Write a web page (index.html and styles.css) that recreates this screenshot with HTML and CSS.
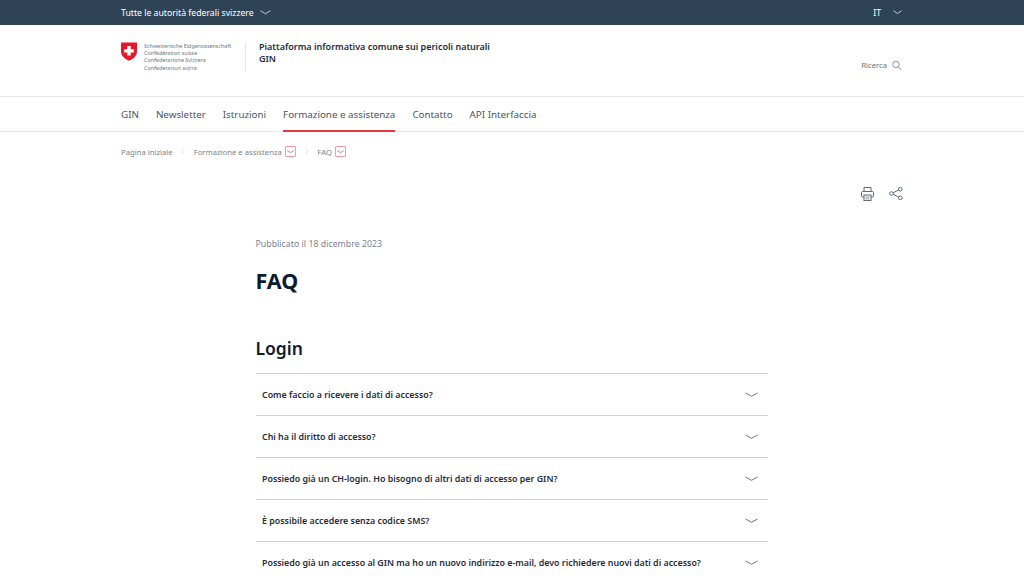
FILE: index.html
```html
<!DOCTYPE html>
<html lang="it">
<head>
<meta charset="utf-8">
<title>FAQ</title>
<link rel="stylesheet" href="styles.css">
</head>
<body>
<div class="topbar">
  <div class="wrap topbar-in">
    <div class="top-left"><span>Tutte le autorità federali svizzere</span>
      <svg class="chev" width="11" height="5" viewBox="0 0 11 5"><path d="M.5.7 5.5 3.8 10.5.7" fill="none" stroke="#c3ccd4" stroke-width="1"/></svg>
    </div>
    <div class="top-right"><span>IT</span>
      <svg class="chev" width="9" height="5" viewBox="0 0 9 5"><path d="M.5.7 4.5 3.6 8.5.7" fill="none" stroke="#c3ccd4" stroke-width="1"/></svg>
    </div>
  </div>
</div>
<header class="header">
  <div class="wrap header-in">
    <div class="brand">
      <svg class="flag" width="16" height="19" viewBox="0 0 16 19">
        <path d="M0 .5H16V9.5C16 14 12 17 8 18.7 4 17 0 14 0 9.5Z" fill="#e8182c"/>
        <path d="M6.3 4H9.7V7.2H12.8V10.4H9.7V13.6H6.3V10.4H3.2V7.2H6.3Z" fill="#fff"/>
      </svg>
      <div class="confed">
        <div>Schweizerische Eidgenossenschaft</div>
        <div>Confédération suisse</div>
        <div>Confederazione Svizzera</div>
        <div>Confederaziun svizra</div>
      </div>
      <div class="site-title">
        <div>Piattaforma informativa comune sui pericoli naturali</div>
        <div>GIN</div>
      </div>
    </div>
    <div class="search"><span>Ricerca</span>
      <svg width="10" height="11" viewBox="0 0 11 11"><circle cx="4.3" cy="4.3" r="3.6" fill="none" stroke="#7d8a96"/><path d="M7 7l3.6 3.6" stroke="#7d8a96"/></svg>
    </div>
  </div>
</header>
<nav class="nav">
  <div class="wrap nav-in">
    <a class="nav-item">GIN</a>
    <a class="nav-item">Newsletter</a>
    <a class="nav-item">Istruzioni</a>
    <a class="nav-item active">Formazione e assistenza</a>
    <a class="nav-item">Contatto</a>
    <a class="nav-item">API Interfaccia</a>
  </div>
</nav>
<div class="wrap crumbs">
  <span>Pagina iniziale</span>
  <svg class="sep" width="4" height="7" viewBox="0 0 4 7"><path d="M.7.7 3 3.5.7 6.3" fill="none" stroke="#d5d9dd" stroke-width=".8"/></svg>
  <span>Formazione e assistenza</span>
  <span class="crumb-btn"><svg width="7" height="4" viewBox="0 0 7 4"><path d="M.3.6 3.5 2.8 6.7.6" fill="none" stroke="#e5606c" stroke-width=".9"/></svg></span>
  <svg class="sep" width="4" height="7" viewBox="0 0 4 7"><path d="M.7.7 3 3.5.7 6.3" fill="none" stroke="#d5d9dd" stroke-width=".8"/></svg>
  <span>FAQ</span>
  <span class="crumb-btn"><svg width="7" height="4" viewBox="0 0 7 4"><path d="M.3.6 3.5 2.8 6.7.6" fill="none" stroke="#e5606c" stroke-width=".9"/></svg></span>
</div>
<div class="wrap tools">
  <svg width="13" height="14" viewBox="0 0 13 14" fill="none" stroke="#5f6b76" stroke-width="1"><path d="M3 4.5V.5H10V4.5"/><rect x=".5" y="4.5" width="12" height="5.5" rx="1"/><rect x="3" y="8" width="7" height="5.5" fill="#fff"/><path d="M4.500 10H8.500M4.500 11.800H8.500" stroke-width=".7"/></svg>
  <svg width="14" height="13" viewBox="0 0 14 13" fill="none" stroke="#5f6b76" stroke-width="1"><circle cx="2.500" cy="6.500" r="1.800"/><circle cx="11.300" cy="2.200" r="1.800"/><circle cx="11.300" cy="10.800" r="1.800"/><path d="M4.100 5.700 9.700 3M4.100 7.300 9.700 10"/></svg>
</div>
<main class="content">
  <p class="date">Pubblicato il 18 dicembre 2023</p>
  <h1 class="title">FAQ</h1>
  <h2 class="section">Login</h2>
  <div class="faq">
    <div class="faq-item"><span>Come faccio a ricevere i dati di accesso?</span><svg width="13" height="6" viewBox="0 0 13 6"><path d="M.5 1 6.500 4.300 12.500 1" fill="none" stroke="#6b7680"/></svg></div>
    <div class="faq-item"><span>Chi ha il diritto di accesso?</span><svg width="13" height="6" viewBox="0 0 13 6"><path d="M.5 1 6.500 4.300 12.500 1" fill="none" stroke="#6b7680"/></svg></div>
    <div class="faq-item"><span>Possiedo già un CH-login. Ho bisogno di altri dati di accesso per GIN?</span><svg width="13" height="6" viewBox="0 0 13 6"><path d="M.5 1 6.500 4.300 12.500 1" fill="none" stroke="#6b7680"/></svg></div>
    <div class="faq-item"><span>È possibile accedere senza codice SMS?</span><svg width="13" height="6" viewBox="0 0 13 6"><path d="M.5 1 6.500 4.300 12.500 1" fill="none" stroke="#6b7680"/></svg></div>
    <div class="faq-item"><span>Possiedo già un accesso al GIN ma ho un nuovo indirizzo e-mail, devo richiedere nuovi dati di accesso?</span><svg width="13" height="6" viewBox="0 0 13 6"><path d="M.5 1 6.500 4.300 12.500 1" fill="none" stroke="#6b7680"/></svg></div>
  </div>
</main>
</body>
</html>
```
FILE: styles.css
```css
* { box-sizing: border-box; }
html, body { margin: 0; height: 576px; overflow: hidden; }
body { font-family: "Noto Sans", sans-serif; background: #fff; color: #1f2d3a; }
.wrap { width: 782px; margin: 0 auto; }
.topbar { height: 25px; background: #2f4357; color: #fff; font-size: 8.700px; }
.topbar-in { height: 100%; display: flex; justify-content: space-between; align-items: center; }
.top-left { display: flex; align-items: center; gap: 6px; }
.top-right { display: flex; align-items: center; gap: 12px; padding-right: 1px; }
.header { height: 72px; border-bottom: 1px solid #e5e7eb; }
.header-in { display: flex; justify-content: space-between; height: 100%; }
.brand { display: flex; align-items: flex-start; padding-top: 17px; }
.flag { flex: none; }
.confed { margin-left: 7px; padding-top: 1px; font-size: 5.400px; line-height: 7.200px; color: #6b7680; width: 102px; height: 30px; border-right: 1px solid #e5e7eb; white-space: nowrap; }
.site-title { margin-left: 13px; margin-top: -1px; font-size: 9px; line-height: 12px; font-weight: 600; color: #1f2d3a; }
.search { display: flex; align-items: center; gap: 5px; padding-top: 9px; padding-right: 1px; font-size: 7.700px; color: #66717c; }
.nav { height: 35px; border-bottom: 1px solid #e5e7eb; }
.nav-in { display: flex; gap: 17px; height: 100%; }
.nav-item { display: flex; align-items: center; font-size: 9.800px; color: #4a5560; height: 35px; padding-top: 1px; border-bottom: 2px solid transparent; }
.nav-item.active { border-bottom-color: #e53940; }
.crumbs { display: flex; align-items: center; height: 39px; font-size: 7.700px; color: #7a848e; }
.crumbs .sep { margin: 0 8.500px; }
.crumb-btn { display: flex; align-items: center; justify-content: center; width: 11px; height: 11px; margin-left: 3.500px; border: 1px solid #f09aa1; border-radius: 1px; }
.tools { display: flex; justify-content: flex-end; align-items: center; gap: 15px; height: 45px; }
.content { width: 512.500px; margin-left: 255.500px; }
.date { margin: 0; padding-top: 21px; font-size: 8.800px; line-height: 14px; color: #7a848e; }
.title { margin: 15px 0 0; font-size: 21.500px; line-height: 30px; font-weight: 700; color: #0e1b2c; }
.section { margin: 40px 0 0; font-size: 17.500px; line-height: 24px; font-weight: 600; color: #0e1b2c; }
.faq { margin-top: 13px; }
.faq-item { height: 42px; border-top: 1px solid #cfd3d7; display: flex; justify-content: space-between; align-items: center; padding: 0 10px 0 6.500px; font-size: 8.850px; font-weight: 600; color: #1f2d3a; }
```
